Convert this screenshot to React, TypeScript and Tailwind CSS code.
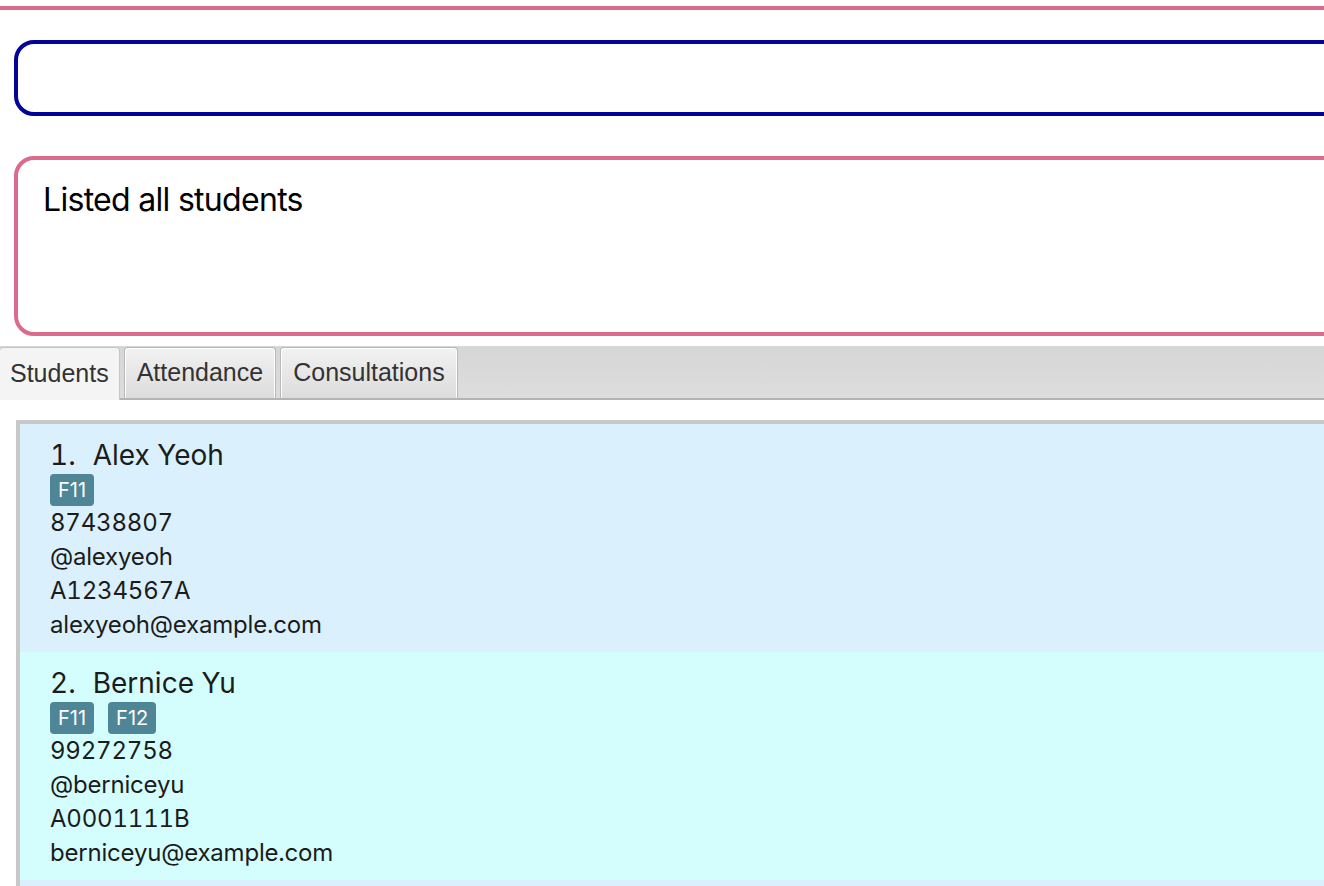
import { useState } from 'react';

type Student = {
  name: string;
  tags: string[];
  phone: string;
  telegram: string;
  studentId: string;
  email: string;
};

const students: Student[] = [
  {
    name: 'Alex Yeoh',
    tags: ['F11'],
    phone: '87438807',
    telegram: '@alexyeoh',
    studentId: 'A1234567A',
    email: 'alexyeoh@example.com',
  },
  {
    name: 'Bernice Yu',
    tags: ['F11', 'F12'],
    phone: '99272758',
    telegram: '@berniceyu',
    studentId: 'A0001111B',
    email: 'berniceyu@example.com',
  },
  {
    name: 'Charlotte Oliveiro',
    tags: ['F12'],
    phone: '93210283',
    telegram: '@charlotte',
    studentId: 'A0002222C',
    email: 'charlotte@example.com',
  },
];

const tabs = ['Students', 'Attendance', 'Consultations'];

function StudentCard({ student, index }: { student: Student; index: number }) {
  const bg = index % 2 === 0 ? 'bg-[#daf1fd]' : 'bg-[#d4fefe]';
  return (
    <div className={`${bg} pl-[30px] pt-[14px] pb-[10px] text-[#1c1c1c] font-['Inter',sans-serif]`}>
      <div className="flex text-[28px] leading-[34px] tabular-nums">
        <span>{index + 1}.</span>
        <span className="ml-[17px]">{student.name}</span>
      </div>
      <div className="flex gap-[14px] mt-[2px]">
        {student.tags.map((tag) => (
          <span
            key={tag}
            className="h-[32px] px-[8px] rounded-[4px] bg-[#4e8597] text-white text-[20px] leading-[32px]"
          >
            {tag}
          </span>
        ))}
      </div>
      <div className="text-[24px] leading-[34px] tracking-[-0.2px] tabular-nums">
        <div>{student.phone}</div>
        <div>{student.telegram}</div>
        <div>{student.studentId}</div>
        <div>{student.email}</div>
      </div>
    </div>
  );
}

export default function App() {
  const [active, setActive] = useState(0);

  return (
    <div className="h-screen w-full overflow-hidden bg-white">
      <div className="h-[4px] mt-[6px] bg-[#dc6a8c]" />

      <div className="ml-[14px] mr-[-40px] mt-[30px] h-[76px] rounded-[20px] border-[4px] border-[#020399]" />

      <div className="ml-[14px] mr-[-40px] mt-[40px] h-[180px] rounded-[20px] border-[4px] border-[#dc6a8c] pl-[25px] pt-[20px]">
        <div className="text-[32px] leading-[40px] tracking-[-0.7px] text-black font-['Inter',sans-serif]">
          Listed all students
        </div>
      </div>

      <div className="mt-[10px] h-[54px] flex items-end gap-[4px] bg-gradient-to-b from-[#d6d6d6] to-[#dddddd] border-b-[2px] border-[#b4b4b4] font-['Liberation_Sans',sans-serif]">
        {tabs.map((tab, i) => {
          const selected = i === active;
          return (
            <button
              key={tab}
              onClick={() => setActive(i)}
              className={
                selected
                  ? 'h-[53px] mb-[-2px] px-[10px] rounded-t-[4px] border border-b-0 border-[#c4c4c4] border-l-0 bg-[#f4f4f4] text-[25px] text-[#333333]'
                  : 'h-[51px] px-[12px] rounded-t-[4px] border border-b-0 border-[#b8b8b8] shadow-[inset_1px_1px_0_#ffffff,inset_-1px_0_0_#ffffff] bg-gradient-to-b from-[#f2f2f2] to-[#dcdcdc] text-[25px] text-[#333333]'
              }
            >
              {tab}
            </button>
          );
        })}
      </div>

      <div className="mt-[20px] ml-[16px] border-l-[4px] border-t-[4px] border-[#c8c8c8]">
        {students.map((s, i) => (
          <StudentCard key={s.name} student={s} index={i} />
        ))}
      </div>
    </div>
  );
}
